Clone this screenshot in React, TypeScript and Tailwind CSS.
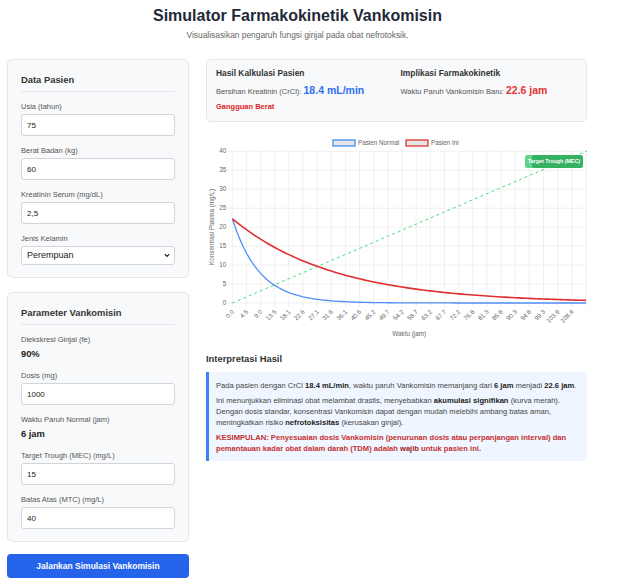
import React from "react";

const X_LABELS = ["0.0", "4.5", "9.0", "13.5", "18.1", "22.6", "27.1", "31.6", "36.1", "40.6", "45.2", "49.7", "54.2", "58.7", "63.2", "67.7", "72.2", "76.8", "81.3", "85.8", "90.3", "94.8", "99.3", "103.9", "108.4"];

// plot geometry inside the svg (381 x 210)
const PL = 26.3;
const PR = 380;
const PT = 19.3;
const PB = 171;
const N = 100;
const STEP = 112.875 / N;
const C0 = 22.2;

const xs = (i: number) => PL + (i / N) * (PR - PL);
const ys = (v: number) => PB - (v / 40) * (PB - PT);

const curve = (halfLife: number) => {
  const k = Math.LN2 / halfLife;
  let d = "";
  for (let i = 0; i <= N; i++) {
    const c = C0 * Math.exp(-k * i * STEP);
    d += `${i === 0 ? "M" : "L"}${xs(i).toFixed(2)},${ys(c).toFixed(2)}`;
  }
  return d;
};

const Chart = () => {
  const yTicks = [0, 5, 10, 15, 20, 25, 30, 35, 40];
  return (
    <svg width="381" height="210" className="block mt-[10px]" style={{ fontFamily: "'Liberation Sans', Arial, sans-serif" }}>
      {/* legend */}
      <rect x="127" y="8" width="22" height="6" fill="#e6e6e6" stroke="#3b82f6" strokeWidth="1.2" />
      <text x="152" y="11.5" fontSize="6.3" fill="#666" dominantBaseline="middle">Pasien Normal</text>
      <rect x="200" y="8" width="22" height="6" fill="#e6e6e6" stroke="#dc2626" strokeWidth="1.2" />
      <text x="225" y="11.5" fontSize="6.3" fill="#666" dominantBaseline="middle">Pasien Ini</text>

      {/* grid */}
      {yTicks.map((v) => (
        <g key={v}>
          <line x1={PL - 4} x2={PR} y1={ys(v)} y2={ys(v)} stroke="#e6e6e6" strokeWidth="0.6" />
          <text x={PL - 6} y={ys(v)} fontSize="6.3" fill="#666" textAnchor="end" dominantBaseline="middle">{v}</text>
        </g>
      ))}
      {X_LABELS.map((l, j) => {
        const x = xs(j * 4);
        return (
          <g key={l}>
            <line x1={x} x2={x} y1={PT} y2={PB + 4} stroke="#e6e6e6" strokeWidth="0.6" />
            <text x={x + 1} y={PB + 8} fontSize="6.3" fill="#666" textAnchor="end" dominantBaseline="middle" transform={`rotate(-45 ${x + 1} ${PB + 8})`}>{l}</text>
          </g>
        );
      })}
      <line x1={PR} x2={PR} y1={PT} y2={PB + 4} stroke="#e6e6e6" strokeWidth="0.6" />

      {/* axis titles */}
      <text x="6" y="95" fontSize="6.3" fill="#666" textAnchor="middle" dominantBaseline="middle" transform="rotate(-90 6 95)">Konsentrasi Plasma (mg/L)</text>
      <text x={(PL + PR) / 2} y="202" fontSize="6.3" fill="#666" textAnchor="middle" dominantBaseline="middle">Waktu (jam)</text>

      {/* target line */}
      <line x1={PL} y1={PB} x2={PR + 1} y2={PT - 0.5} stroke="#4ade80" strokeWidth="1" strokeDasharray="3 3" />

      {/* curves */}
      <path d={curve(6)} fill="none" stroke="#4f8ff7" strokeWidth="1.3" />
      <path d={curve(22.575)} fill="none" stroke="#e02d2d" strokeWidth="1.6" />

      {/* annotation label */}
      <rect x="319" y="23" width="51" height="13" rx="2.5" fill="#5fd48e" />
      <rect x="326" y="23" width="51" height="13" rx="2.5" fill="#34b261" />
      <text x="348" y="29.8" fontSize="5.3" fontWeight="bold" fill="#fff" textAnchor="middle" dominantBaseline="middle">Target Trough (MEC)</text>
    </svg>
  );
};

const Label = ({ children }: { children: React.ReactNode }) => (
  <label className="block text-[7.5px] leading-[9px] text-[#555] mb-[3px]">{children}</label>
);

const Field = ({ label, value }: { label: string; value: string }) => (
  <div>
    <Label>{label}</Label>
    <input
      defaultValue={value}
      className="block w-full h-[22px] bg-white border border-[#d1d5db] rounded-[3px] px-[5px] text-[8px] text-[#222] outline-none"
    />
  </div>
);

const Static = ({ label, value }: { label: string; value: string }) => (
  <div>
    <Label>{label}</Label>
    <p className="text-[9.3px] leading-[14px] font-bold text-[#222]">{value}</p>
  </div>
);

const Panel = ({ title, children }: { title: string; children: React.ReactNode }) => (
  <div className="bg-[#f8f9fa] border border-[#e5e7eb] rounded-[5px] px-[13px] pt-[14px] pb-[12px]">
    <h3 className="text-[9.4px] leading-[12px] font-bold text-[#333] pb-[5px] border-b border-[#e5e7eb] mb-[10px]">{title}</h3>
    <div className="flex flex-col gap-[10px]">{children}</div>
  </div>
);

export default function App() {
  return (
    <div className="w-[595px] px-[7px] pt-[6px] bg-white font-['Liberation_Sans',Arial,sans-serif]">
      <h1 className="text-center text-[16px] leading-[20px] font-bold text-[#1f2937]">Simulator Farmakokinetik Vankomisin</h1>
      <p className="text-center text-[8.4px] leading-[10px] text-[#666] mt-[4px]">Visualisasikan pengaruh fungsi ginjal pada obat nefrotoksik.</p>

      <div className="flex gap-[17px] mt-[19px]">
        {/* left column */}
        <div className="w-[182px] shrink-0">
          <Panel title="Data Pasien">
            <Field label="Usia (tahun)" value="75" />
            <Field label="Berat Badan (kg)" value="60" />
            <Field label="Kreatinin Serum (mg/dL)" value="2,5" />
            <div>
              <Label>Jenis Kelamin</Label>
              <div className="relative">
                <select
                  defaultValue="Perempuan"
                  className="block w-full h-[19px] appearance-none bg-white border border-[#d1d5db] rounded-[3px] px-[5px] text-[9px] text-[#222] outline-none"
                >
                  <option>Laki-laki</option>
                  <option>Perempuan</option>
                </select>
                <svg className="absolute right-[5px] top-[7px]" width="6" height="5" viewBox="0 0 6 5">
                  <path d="M0.8 1.2 L3 3.4 L5.2 1.2" fill="none" stroke="#222" strokeWidth="1.2" />
                </svg>
              </div>
            </div>
          </Panel>

          <div className="mt-[14px]">
            <Panel title="Parameter Vankomisin">
              <Static label="Diekskresi Ginjal (fe)" value="90%" />
              <Field label="Dosis (mg)" value="1000" />
              <Static label="Waktu Paruh Normal (jam)" value="6 jam" />
              <Field label="Target Trough (MEC) (mg/L)" value="15" />
              <Field label="Batas Atas (MTC) (mg/L)" value="40" />
            </Panel>
          </div>

          <button className="mt-[12px] w-full h-[24px] bg-[#2563eb] rounded-[4px] text-white font-bold text-[8.5px]">
            Jalankan Simulasi Vankomisin
          </button>
        </div>

        {/* right column */}
        <div className="w-[381px] shrink-0">
          <div className="grid grid-cols-2 gap-x-[8px] bg-[#f8f9fa] border border-[#e5e7eb] rounded-[5px] px-[9px] pt-[8px] pb-[9px]">
            <div>
              <h4 className="text-[8.4px] leading-[11px] font-bold text-[#333] mb-[4px]">Hasil Kalkulasi Pasien</h4>
              <p className="text-[7.5px] leading-[14px] text-[#555]">
                Bersihan Kreatinin (CrCl): <span className="text-[10.5px] font-bold text-[#2f6ff0]">18.4 mL/min</span>
              </p>
              <p className="mt-[3px] text-[7.5px] leading-[10px] font-bold text-[#dc2626]">Gangguan Berat</p>
            </div>
            <div>
              <h4 className="text-[8.4px] leading-[11px] font-bold text-[#333] mb-[4px]">Implikasi Farmakokinetik</h4>
              <p className="text-[7.5px] leading-[14px] text-[#555]">
                Waktu Paruh Vankomisin Baru: <span className="text-[10.5px] font-bold text-[#e53131]">22.6 jam</span>
              </p>
            </div>
          </div>

          <Chart />

          <h3 className="mt-[11px] mb-[7px] text-[9.4px] leading-[12px] font-bold text-[#333]">Interpretasi Hasil</h3>
          <div className="border-l-[3px] border-[#3b82f6] bg-[#eff6ff] rounded-r-[5px] pl-[7px] pr-[4px] pt-[8px] pb-[7px] text-[7.6px] leading-[11px] text-[#444]">
            <p className="mb-[4px] whitespace-nowrap">
              Pada pasien dengan CrCl <b className="text-[#222]">18.4 mL/min</b>, waktu paruh Vankomisin memanjang dari <b className="text-[#222]">6 jam</b> menjadi <b className="text-[#222]">22.6 jam</b>.
            </p>
            <p className="mb-[4px]">
              Ini menunjukkan eliminasi obat melambat drastis, menyebabkan <b className="text-[#222]">akumulasi signifikan</b> (kurva merah).
              <br />
              Dengan dosis standar, konsentrasi Vankomisin dapat dengan mudah melebihi ambang batas aman,
              <br />
              meningkatkan risiko <b className="text-[#222]">nefrotoksisitas</b> (kerusakan ginjal).
            </p>
            <p className="font-bold text-[#c53030]">
              KESIMPULAN: Penyesuaian dosis Vankomisin (penurunan dosis atau perpanjangan interval) dan
              <br />
              pemantauan kadar obat dalam darah (TDM) adalah <span className="text-[#9b1c1c]">wajib</span> untuk pasien ini.
            </p>
          </div>
        </div>
      </div>
    </div>
  );
}
